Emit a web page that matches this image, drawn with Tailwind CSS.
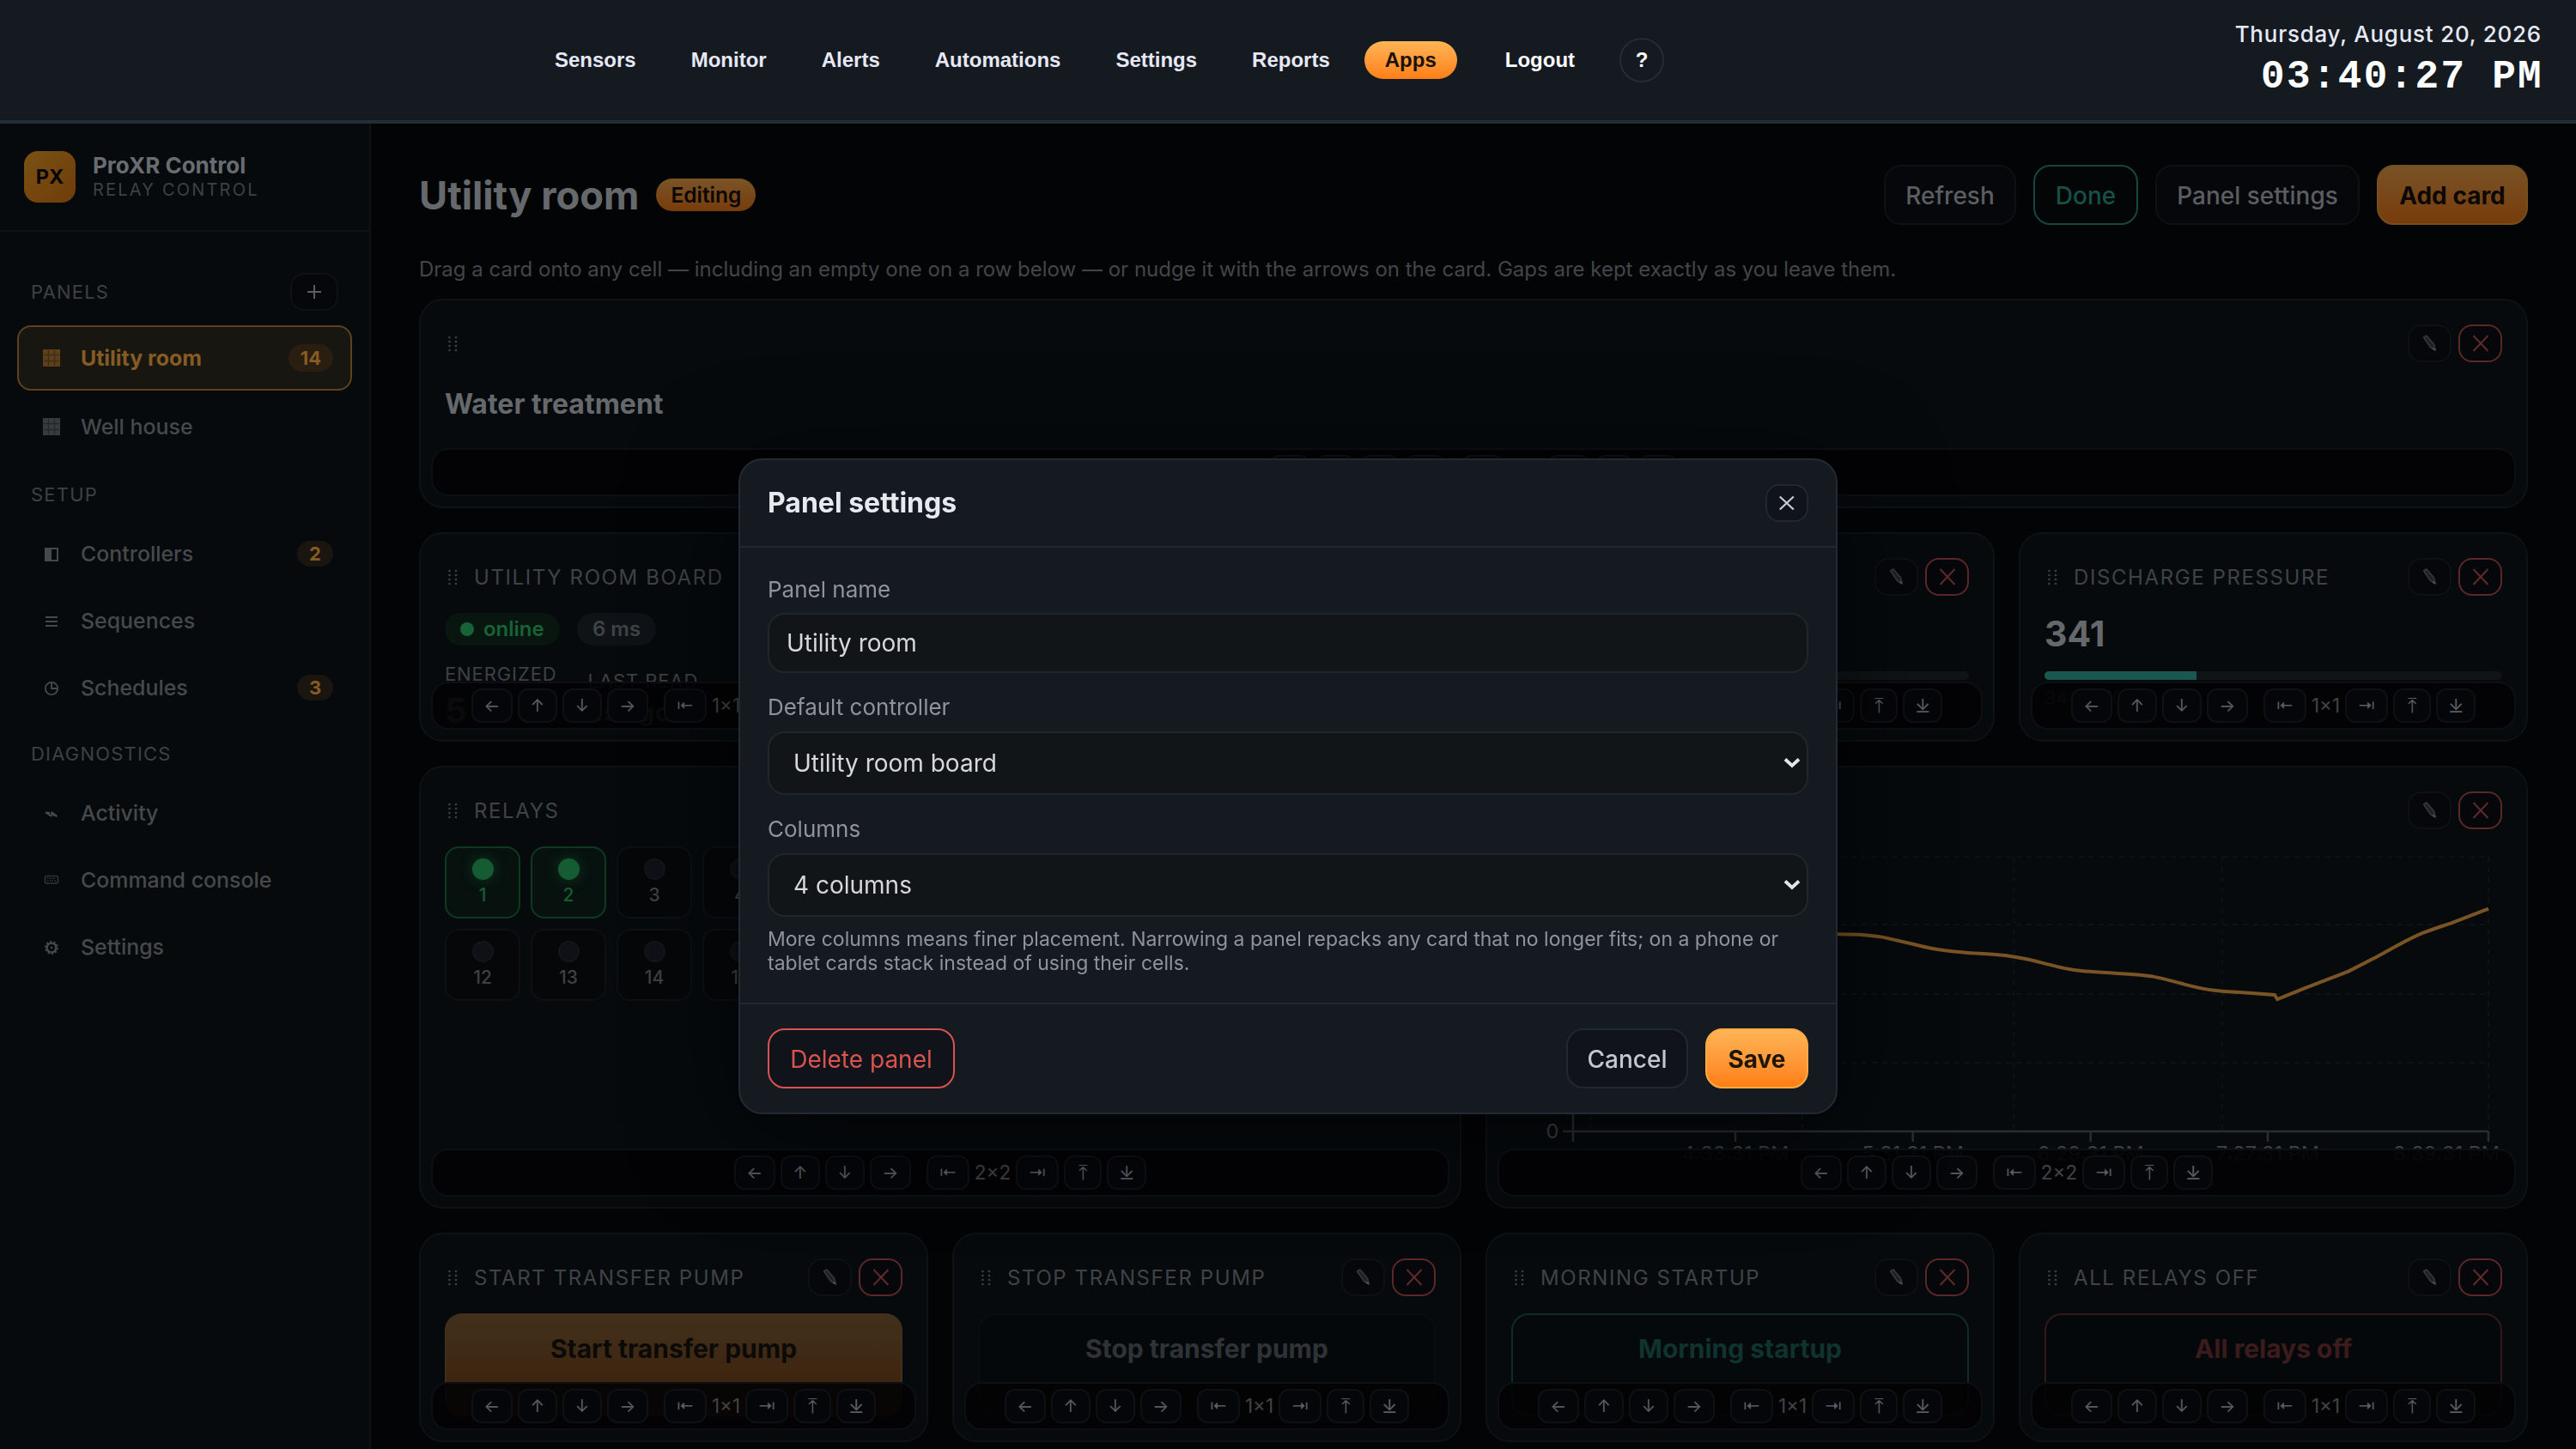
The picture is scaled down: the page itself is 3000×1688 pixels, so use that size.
<!DOCTYPE html>
<html lang="en">
<head>
    <meta charset="UTF-8">
    <meta name="viewport" content="width=device-width, initial-scale=1.0">
    <title>ProXR Control - Utility room</title>
    <script src="https://cdn.jsdelivr.net/npm/@tailwindcss/browser@4"></script>
</head>
<body class="w-[3000px] h-[1688px] overflow-hidden bg-[#030406] font-['Inter',sans-serif] flex flex-col">

    <!-- Top bar -->
    <header class="h-[144px] shrink-0 bg-[#151920] border-b-4 border-[#232d36] flex items-center justify-between pl-[622px] pr-[40px]">
        <nav class="flex items-center gap-4 font-['Liberation_Sans',Arial,sans-serif] font-bold text-[24px] text-[#e6e9f5]">
            <a class="px-6">Sensors</a>
            <a class="px-6">Monitor</a>
            <a class="px-6">Alerts</a>
            <a class="px-6">Automations</a>
            <a class="px-6">Settings</a>
            <a class="px-6">Reports</a>
            <a class="px-6 h-[44px] leading-[43px] rounded-[22px] bg-linear-to-b from-[#ffb454] to-[#ff7f11] text-[#1a1206]">Apps</a>
            <a class="px-6 ml-4 text-white">Logout</a>
            <span class="ml-3 w-[52px] h-[52px] rounded-full border-2 border-[#232d36] text-white flex items-center justify-center">?</span>
        </nav>
        <div class="text-right">
            <div class="text-[26px] leading-[40px] font-medium tracking-[0.75px] text-[#e6e9f5]">Thursday, August 20, 2026</div>
            <div class="font-['Courier_New','Liberation_Mono',monospace] font-bold text-[46px] leading-[60px] tracking-[2.3px] -mr-[2px] text-white">03:40:27 PM</div>
        </div>
    </header>

    <div class="flex flex-1 min-h-0">

        <!-- Sidebar -->
        <aside class="w-[432px] shrink-0 bg-[#060a0d] border-r-2 border-[#0d1215] text-[24.9px] font-medium text-[#46494c]">
            <div class="h-[126px] border-b-2 border-[#0d1215] flex items-center gap-[20px] pl-[28px]">
                <div class="w-[60px] h-[60px] rounded-[16px] bg-linear-to-br from-[#7a5213] to-[#6f3c0a] text-[#070605] text-[23.500px] font-bold flex items-center justify-center">PX</div>
                <div>
                    <div class="text-[26px] leading-[30px] font-bold text-[#696c70]">ProXR Control</div>
                    <div class="text-[20px] leading-[26px] font-normal tracking-[2.200px] text-[#3e4144]">RELAY CONTROL</div>
                </div>
            </div>

            <div class="px-5">
                <div class="h-[109px] pt-[48px] flex justify-between pl-[16px] pr-[16px]">
                    <span class="text-[22px] leading-[44px] font-normal tracking-[1.2px] text-[#3e4144]">PANELS</span>
                    <span class="w-[56px] h-[44px] rounded-[16px] border-2 border-[#0e1216] bg-[#05070a] text-[#696c70] flex items-center justify-center">
                        <svg class="w-[18px] h-[18px]" viewBox="0 0 18 18"><path d="M9 1v16M1 9h16" stroke="#5b5e61" stroke-width="2"/></svg>
                    </span>
                </div>
                <a class="h-[76px] rounded-[16px] border-2 border-[#5f421d] bg-[#181610] text-[#865b24] font-bold flex items-center pl-[26px] pr-[20px]">
                    <svg class="w-[24px] h-[24px] mr-[22px]" viewBox="0 0 24 24"><rect x="2" y="2" width="20" height="20" fill="#5c401c"/><path d="M8.5 3v18M15.5 3v18M3 8.5h18M3 15.5h18" stroke="#3d2c16" stroke-width="1.3"/></svg>
                    <span class="flex-1 pt-[1px]">Utility room</span>
                    <span class="w-[52px] h-[32px] rounded-full bg-[#291e10] text-[22px] leading-[32px] text-center">14</span>
                </a>
                <a class="mt-1 h-[76px] flex items-center pl-[28px]">
                    <svg class="w-[24px] h-[24px] mr-[22px]" viewBox="0 0 24 24"><rect x="2" y="2" width="20" height="20" fill="#383b3e"/><path d="M8.5 3v18M15.5 3v18M3 8.5h18M3 15.5h18" stroke="#25282b" stroke-width="1.3"/></svg>
                    <span class="pt-[1px]">Well house</span>
                </a>

                <div class="h-[73px] pt-[25px] pl-[16px] text-[22px] leading-[32px] font-normal tracking-[1.2px] text-[#3e4144]">SETUP</div>
                <a class="h-[74px] flex items-center pl-[28px] pr-[22px]">
                    <svg class="w-[24px] h-[24px] mr-[22px]" viewBox="0 0 24 24"><rect x="5" y="6" width="14" height="14" fill="none" stroke="#46494c" stroke-width="2"/><rect x="5" y="6" width="7" height="14" fill="#46494c"/></svg>
                    <span class="flex-1 pt-[1px]">Controllers</span>
                    <span class="w-[42px] h-[30px] rounded-full bg-[#1a150f] text-[#865b24] text-[22px] leading-[30px] font-bold text-center">2</span>
                </a>
                <a class="mt-1 h-[74px] flex items-center pl-[28px]">
                    <svg class="w-[24px] h-[24px] mr-[22px]" viewBox="0 0 24 24"><path d="M5 8h14M5 13h14M5 18h14" stroke="#46494c" stroke-width="2.2"/></svg>
                    <span class="pt-[1px]">Sequences</span>
                </a>
                <a class="mt-1 h-[74px] flex items-center pl-[28px] pr-[22px]">
                    <svg class="w-[24px] h-[24px] mr-[22px]" viewBox="0 0 24 24" fill="none" stroke="#46494c" stroke-width="1.8"><circle cx="12" cy="13" r="7.2"/><path d="M12 6v7h7"/></svg>
                    <span class="flex-1 pt-[1px]">Schedules</span>
                    <span class="w-[42px] h-[30px] rounded-full bg-[#1a150f] text-[#865b24] text-[22px] leading-[30px] font-bold text-center">3</span>
                </a>

                <div class="h-[72px] pt-[24px] pl-[16px] text-[22px] leading-[32px] font-normal tracking-[1.2px] text-[#3e4144]">DIAGNOSTICS</div>
                <a class="h-[74px] flex items-center pl-[28px]">
                    <svg class="w-[24px] h-[24px] mr-[22px]" viewBox="0 0 24 24" fill="none" stroke="#46494c" stroke-width="2"><path d="M5 11.500L11.500 15.500 12.500 11.500 18.500 16M5 11.500L10 12M13.500 14L18.500 16"/></svg>
                    <span class="pt-[1px]">Activity</span>
                </a>
                <a class="mt-1 h-[74px] flex items-center pl-[28px]">
                    <svg class="w-[24px] h-[24px] mr-[22px]" viewBox="0 0 24 24" fill="none" stroke="#303336" stroke-width="1.6"><rect x="4.500" y="7.500" width="15" height="8.500" rx="2"/><path d="M7 10.200h10M7 13h1.500M10 13h4M15.500 13H17" stroke-dasharray="1.500 1"/></svg>
                    <span class="pt-[1px]">Command console</span>
                </a>
                <a class="mt-1 h-[74px] flex items-center pl-[28px]">
                    <svg class="w-[24px] h-[24px] mr-[22px]" viewBox="0 0 24 24" fill="none" stroke="#46494c"><circle cx="12" cy="13" r="5.400" stroke-width="2.400"/><circle cx="12" cy="13" r="7.200" stroke-width="1.600" stroke-dasharray="2.300 2.224"/><circle cx="12" cy="13" r="1.300" fill="#46494c" stroke="none"/></svg>
                    <span class="pt-[1px]">Settings</span>
                </a>
            </div>
        </aside>

        <!-- Panel -->
        <main class="flex-1 pt-[48px] px-[56px]">
            <div class="h-[70px] flex items-center justify-between">
                <div class="flex items-center gap-[20px]">
                    <h1 class="text-[45.300px] font-bold text-[#66696c] pt-[2px]">Utility room</h1>
                    <span class="w-[116px] h-[38px] rounded-full bg-linear-to-b from-[#7a5426] to-[#783c09] text-[#0b0805] text-[24.500px] leading-[38px] font-semibold text-center">Editing</span>
                </div>
                <div class="flex gap-[20px] text-[28px] font-medium leading-[36px]">
                    <span class="w-[154px] h-[70px] rounded-[20px] border-2 border-[#0d1014] bg-[#06070b] text-[#5b5e61] text-center pt-[16px]">Refresh</span>
                    <span class="w-[122px] h-[70px] rounded-[20px] border-2 border-[#14473f] bg-[#030507] text-[#165047] text-center pt-[16px]">Done</span>
                    <span class="w-[238px] h-[70px] rounded-[20px] border-2 border-[#0d1014] bg-[#06070b] text-[#5b5e61] text-center pt-[16px]">Panel settings</span>
                    <span class="w-[176px] h-[70px] rounded-[20px] border-2 border-[#75501f] bg-linear-to-b from-[#785225] to-[#783c09] text-[#0b0805] font-bold text-center pt-[16px]">Add card</span>
                </div>
            </div>
            <p class="mt-[34px] h-[52px] text-[24px] leading-[36px] text-[#434649]">Drag a card onto any cell — including an empty one on a row below — or nudge it with the arrows on the card. Gaps are kept exactly as you leave them.</p>

            <div id="grid" class="grid grid-cols-4 auto-rows-[244px] gap-[28px]"></div>
        </main>
    </div>

    <!-- Panel settings dialog -->
    <div class="fixed left-[860px] top-[534px] w-[1280px] h-[764px] rounded-[28px] border-2 border-[#222b33] bg-[#151920] shadow-[0_20px_120px_rgba(0,0,0,0.6)] flex flex-col text-[#e6e9ee]">
        <div class="h-[102px] shrink-0 border-b-2 border-[#222830] px-8 flex items-center justify-between">
            <h2 class="text-[32px] font-bold">Panel settings</h2>
            <span class="w-[50px] h-[44px] rounded-[16px] border-2 border-[#202830] bg-[#10141a] flex items-center justify-center">
                <svg class="w-[20px] h-[20px]" viewBox="0 0 20 20"><path d="M1.800 2.500l16 15M17.800 2.500l-16 15" stroke="#c9ccd1" stroke-width="2.200"/></svg>
            </span>
        </div>
        <div class="flex-1 px-8 pt-[31px]">
            <label class="block text-[26px] leading-[36px] text-[#90949a]">Panel name</label>
            <div class="mt-[9px] h-[70px] rounded-[20px] border-2 border-[#1f272d] bg-[#111518] text-[28px] flex items-center pl-[20px] text-[#d6d8db]">Utility room</div>
            <label class="mt-[22px] block text-[26px] leading-[36px] text-[#90949a]">Default controller</label>
            <div class="mt-[10px] h-[74px] rounded-[20px] border-2 border-[#1f272d] bg-[#111518] text-[28px] flex items-center justify-between pl-[28px] pr-[7px] text-[#d6d8db]">
                <span>Utility room board</span>
                <svg class="w-[20px] h-[14px]" viewBox="0 0 20 14"><path d="M2 2.500l8 7.500 8-7.500" fill="none" stroke="#e3e5e8" stroke-width="3.800"/></svg>
            </div>
            <label class="mt-[22px] block text-[26px] leading-[36px] text-[#90949a]">Columns</label>
            <div class="mt-[10px] h-[74px] rounded-[20px] border-2 border-[#1f272d] bg-[#111518] text-[28px] flex items-center justify-between pl-[28px] pr-[7px] text-[#d6d8db]">
                <span>4 columns</span>
                <svg class="w-[20px] h-[14px]" viewBox="0 0 20 14"><path d="M2 2.500l8 7.500 8-7.500" fill="none" stroke="#e3e5e8" stroke-width="3.800"/></svg>
            </div>
            <p class="mt-[12px] text-[23px] leading-[28px] text-[#90949a]">More columns means finer placement. Narrowing a panel repacks any card that no longer fits; on a phone or<br>tablet cards stack instead of using their cells.</p>
        </div>
        <div class="h-[128px] shrink-0 border-t-2 border-[#222830] px-8 flex items-center gap-[20px] text-[28px] font-medium leading-[36px]">
            <span class="w-[218px] h-[70px] rounded-[20px] border-2 border-[#d9534f] bg-[#10141a] text-[#d9534f] font-normal text-center pt-[16px]">Delete panel</span>
            <span class="flex-1"></span>
            <span class="w-[142px] h-[70px] rounded-[20px] border-2 border-[#202830] bg-[#10141a] text-[#c4c7d2] text-center pt-[16px]">Cancel</span>
            <span class="w-[120px] h-[70px] rounded-[20px] border-2 border-[#ffab45] bg-linear-to-b from-[#ffb454] to-[#ff7f11] text-[#1f1507] font-bold text-center pt-[16px]">Save</span>
        </div>
    </div>

    <script>
        const pencil = `<svg class="w-[24px] h-[24px]" viewBox="0 0 24 24"><path d="M4.500 5L8 3 16.500 13 18.500 20 12.500 16.500Z" fill="#1e2225" stroke="#36393c" stroke-width="1.500" stroke-linejoin="round"/><path d="M15.500 16.500L19 20.500L15 19Z" fill="#56595c"/></svg>`;
        const cross = `<svg class="w-[20px] h-[20px]" viewBox="0 0 20 20"><path d="M1.500 1l17 18M18.500 1l-17 18" stroke="#5e2b2a" stroke-width="2"/></svg>`;

        const head = (title) => `
            <div class="h-[44px] flex items-center">
                <svg class="w-[12px] h-[20px] ml-[4px] mr-[18px]" viewBox="0 0 12 20" fill="#3e4144"><circle cx="1.500" cy="3" r="1.350"/><circle cx="9" cy="3" r="1.350"/><circle cx="1.500" cy="8" r="1.350"/><circle cx="9" cy="8" r="1.350"/><circle cx="1.500" cy="13" r="1.350"/><circle cx="9" cy="13" r="1.350"/><circle cx="1.500" cy="18" r="1.350"/><circle cx="9" cy="18" r="1.350"/></svg>
                <span class="flex-1 pt-[2px] text-[24px] tracking-[1.600px] text-[#404346]">${title}</span>
                <span class="w-[51px] h-[44px] rounded-[16px] border-2 border-[#0d1114] bg-[#05070a] flex items-center justify-center">${pencil}</span>
                <span class="ml-[8px] w-[51px] h-[44px] rounded-[16px] border-2 border-[#5c2827] bg-[#05070a] flex items-center justify-center">${cross}</span>
            </div>`;

        const key = "h-[40px] rounded-[12px] border-2 border-[#0d1014] bg-[#05060a] flex items-center justify-center ";
        const tools = (size) => `
            <div class="absolute left-[12px] right-[12px] bottom-[12px] h-[56px] rounded-[20px] border-2 border-[#0d1013] bg-[#030304]/92 flex items-center justify-center gap-[6px] text-[20px] text-[#5a5d60]">
                <span class="${key} w-[48px]">←</span>
                <span class="${key} w-[46px]">↑</span>
                <span class="${key} w-[46px]">↓</span>
                <span class="${key} w-[48px]">→</span>
                <span class="${key} w-[50px] ml-[12px]">⇤</span>
                <span class="text-[22.500px] text-[#404346]">${size}</span>
                <span class="${key} w-[50px]">⇥</span>
                <span class="${key} w-[44px] text-[24px]">⤒</span>
                <span class="${key} w-[46px] text-[22px]">⤓</span>
            </div>`;

        const card = (span, title, body, size) => `
            <section class="${span} relative overflow-hidden rounded-[28px] border-2 border-[#0d1215] bg-[#060a0d] px-[28px] pt-[28px]">
                ${head(title)}
                ${body}
                ${tools(size)}
            </section>`;

        const relay = (n) => n < 3
            ? `<div class="w-[88px] h-[84px] rounded-[16px] border-2 border-[#0f3a22] bg-[#07120f] text-[#165c33] flex flex-col items-center pt-[12px]"><i class="w-[25px] h-[25px] rounded-full bg-[#165c33] shadow-[0_0_14px_#0f3a22]"></i><b class="text-[21px] leading-[36px] font-medium">${n}</b></div>`
            : `<div class="w-[88px] h-[84px] rounded-[16px] border-2 border-[#0d1014] bg-[#050709] text-[#3e4144] flex flex-col items-center pt-[12px]"><i class="w-[25px] h-[25px] rounded-full border-2 border-[#13161a] bg-[#0e1115]"></i><b class="text-[21px] leading-[36px] font-medium">${n}</b></div>`;
        const relays = Array.from({ length: 22 }, (_, i) => relay(i + 1)).join("");

        const gauge = (v, fill) => `
            <div class="mt-[20px] text-[41px] leading-[48px] font-bold text-[#66696c]">${v}</div>
            <div class="mt-[20px] h-[10px] rounded-full bg-[#101417] overflow-hidden"><div class="h-full bg-[#185850]" style="width:${fill}%"></div></div>
            <div class="mt-[6px] text-[22px] leading-[30px] text-[#404346]">${v} of 1023</div>`;

        const action = (label, look) => `
            <div class="mt-[20px] h-[120px] rounded-[20px] border-2 pt-[15px] text-center text-[30px] leading-[48px] font-bold ${look}">${label}</div>`;

        const board = `
            <div class="mt-[20px] flex gap-[20px] text-[24px] leading-[38px] font-semibold">
                <span class="w-[134px] h-[38px] rounded-full bg-[#08160f] text-[#176337] flex items-center pl-[18px] gap-[11px]"><i class="w-[16px] h-[16px] rounded-full bg-[#176337]"></i>online</span>
                <span class="w-[92px] h-[38px] rounded-full bg-[#0f1216] text-[#404346] text-center">6 ms</span>
            </div>
            <div class="mt-[20px] flex gap-[36px] text-[22px] leading-[26px] tracking-[0.900px] text-[#3e4144]">
                <div>ENERGIZED<div class="mt-[8px] text-[40px] leading-[44px] font-bold text-[#5a5d60]">5</div></div>
                <div class="mt-[8px]">LAST READ<div class="mt-[6px] text-[28px] leading-[36px] font-bold text-[#5a5d60]">2s ago</div></div>
            </div>`;

        // readings of the last four hours
        const chart = `
            <svg class="mt-[20px] w-[1154px] h-[380px]" viewBox="0 0 1154 380" fill="none">
                <path d="M72 11.700H1138M72 91H1138M72 172H1138M72 252H1138M92.700 12V332M339 12V332M585.300 12V332M827.800 12V332M1138 12V332" stroke="#0d1215" stroke-width="2" stroke-dasharray="6 6"/>
                <path d="M60 332H1138M72 12V344M261 332V344M467.700 332V344M674.700 332V344M881 332V344M1138 332V344" stroke="#2b2e31" stroke-width="2.500"/>
                <path d="M72 120C150 100 220 110 300 104C330 102 350 102 380 102.300L406 102.800C420 104 430 105 436.600 106.600L467.700 113.800C480 117 492 120 503.200 120.900C515 122.500 525 123.500 536.500 124.200C545 124.500 553 125 561.500 125.800C573 126.600 583 128 592 129.700C604 131.600 614 134.500 625.300 137.400C640 141.500 652 144 664.100 145C677 146.300 690 146.800 703 147.800C718 148.800 733 149.500 747.400 151.600C759 153.600 770 157 780.700 159.800C793 163 805 166.300 816.700 167.500C829 169 841 169.500 852.800 170.300L888.900 173L892.200 178L924.900 164.800L974.900 145.600L1008.200 128.600C1026 119 1044 108 1060.900 101.200C1075 95.500 1088 92 1102.500 86.300L1138 72.600" stroke="#7a5424" stroke-width="4"/>
                <g fill="#3e4144" font-size="23.500" text-anchor="middle">
                    <text x="48" y="340">0</text>
                    <text x="261" y="366">4:33:31 PM</text>
                    <text x="467.700" y="366">5:31:31 PM</text>
                    <text x="674.700" y="366">6:29:31 PM</text>
                    <text x="881" y="366">7:27:31 PM</text>
                    <text x="1089" y="366">8:39:31 PM</text>
                </g>
            </svg>`;

        document.getElementById("grid").innerHTML = [
            card("col-span-4", "", `<div class="mt-[27px] text-[32px] leading-[44px] font-bold text-[#66696c]">Water treatment</div>`, "4×1"),
            card("", "UTILITY ROOM BOARD", board, "1×1"),
            card("", "WATER METER", gauge(12, 1), "1×1"),
            card("", "FLOW RATE", gauge(204, 20), "1×1"),
            card("", "DISCHARGE PRESSURE", gauge(341, 33.3), "1×1"),
            card("col-span-2 row-span-2", "RELAYS", `<div class="mt-[20px] flex flex-wrap gap-[12px]">${relays}</div>`, "2×2"),
            card("col-span-2 row-span-2", "PRESSURE TREND", chart, "2×2"),
            card("", "START TRANSFER PUMP", action("Start transfer pump", "border-[#41301b] bg-linear-to-b from-[#41301b] to-[#3d1f0a] text-[#0c0a08]"), "1×1"),
            card("", "STOP TRANSFER PUMP", action("Stop transfer pump", "border-[#090d10] bg-[#05080b] text-[#303336]"), "1×1"),
            card("", "MORNING STARTUP", action("Morning startup", "border-[#0d2b29] bg-[#05090b] text-[#0f332f]"), "1×1"),
            card("", "ALL RELAYS OFF", action("All relays off", "border-[#34191a] bg-[#05080b] text-[#3c1b1c]"), "1×1"),
        ].join("");
    </script>
</body>
</html>
